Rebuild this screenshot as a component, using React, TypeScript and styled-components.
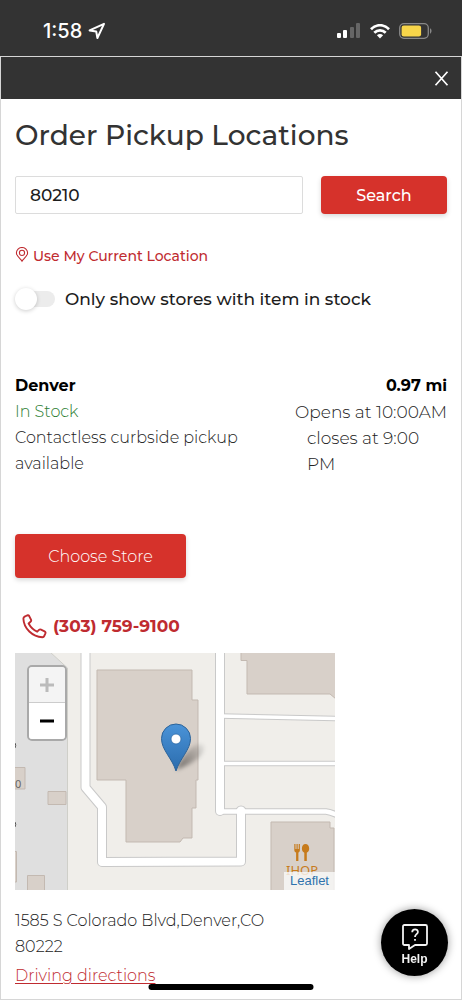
import React, { useState } from "react";
import styled, { createGlobalStyle, css } from "styled-components";

const GlobalStyle = createGlobalStyle`
  *, *::before, *::after { box-sizing: border-box; }
  body {
    margin: 0;
    background: #fff;
    color: #222;
    font-family: Montserrat, Inter, "Liberation Sans", sans-serif;
    font-size: 16px;
    line-height: 26px;
    font-weight: 300;
  }
  h1, h2, p { margin: 0; }
  button, input { font-family: inherit; }
`;

const red = "#d6322b";
const linkRed = "#bf2b30";

const Page = styled.div`
  min-height: 100vh;
  display: flex;
  flex-direction: column;
`;

const StatusBar = styled.header`
  height: 56px;
  padding: 6px 30px 0 43px;
  display: flex;
  align-items: center;
  justify-content: space-between;
  background: #333;
  color: #fff;
`;

const StatusGroup = styled.div<{ $gap: number }>`
  display: flex;
  align-items: center;
  gap: ${(p) => p.$gap}px;
`;

const Clock = styled.span`
  font-family: Inter, sans-serif;
  font-size: 20px;
  line-height: 24px;
  font-weight: 500;
`;

const Dialog = styled.main`
  flex: 1;
  border: 1px solid #d6d6d6;
`;

const DialogBar = styled.div`
  height: 42px;
  padding-right: 10px;
  display: flex;
  align-items: center;
  justify-content: flex-end;
  background: #333;
`;

const CloseButton = styled.button`
  display: flex;
  padding: 2px;
  border: 0;
  background: none;
  color: #fff;
  cursor: pointer;
`;

const Content = styled.div`
  padding: 18px 14px 10px;
`;

const Title = styled.h1`
  color: #333;
  font-size: 28px;
  line-height: 36px;
  font-weight: 500;
`;

const SearchForm = styled.form`
  display: flex;
  gap: 18px;
  margin-top: 23px;
`;

const ZipInput = styled.input`
  flex: 1;
  min-width: 0;
  height: 38px;
  padding: 0 14px;
  border: 1px solid #dcdcdc;
  border-radius: 2px;
  background: #fff;
  color: #1c1c1c;
  font-size: 17px;
  font-weight: 500;
`;

const RedButton = styled.button<{ $large?: boolean }>`
  border: 0;
  border-radius: 4px;
  background: ${red};
  color: #fff;
  font-size: 16px;
  box-shadow: 0 2px 5px rgba(0, 0, 0, 0.16);
  cursor: pointer;
  ${(p) =>
    p.$large
      ? css`
          width: 171px;
          height: 44px;
          margin-top: 57px;
          font-weight: 300;
        `
      : css`
          width: 126px;
          height: 38px;
          font-weight: 500;
        `}
`;

const LocateButton = styled.button`
  display: flex;
  align-items: center;
  gap: 4px;
  margin-top: 29px;
  padding: 0;
  border: 0;
  background: none;
  color: ${linkRed};
  font-size: 14px;
  line-height: 26px;
  font-weight: 500;
  cursor: pointer;
`;

const ToggleLabel = styled.label`
  display: flex;
  align-items: center;
  gap: 10px;
  margin-top: 17px;
  color: #1c1c1c;
  font-size: 17px;
  font-weight: 500;
`;

const Toggle = styled.input`
  appearance: none;
  position: relative;
  width: 38px;
  height: 16px;
  margin: 0 0 0 2px;
  border-radius: 8px;
  background: #ececec;
  &::before {
    content: "";
    position: absolute;
    top: -3px;
    left: -2px;
    width: 22px;
    height: 22px;
    border-radius: 50%;
    background: #fff;
    box-shadow: 0 1px 4px rgba(0, 0, 0, 0.2);
  }
  &:checked::before { left: 18px; }
  &:checked { background: ${red}; }
`;

const Store = styled.section`
  margin-top: 61px;
`;

const StoreSummary = styled.div`
  display: flex;
  justify-content: space-between;
`;

const StoreInfo = styled.div`
  flex: 0 1 240px;
`;

const StoreHours = styled.div`
  flex: 0 0 152px;
`;

const StoreName = styled.h2`
  color: #000;
  font-size: 16px;
  line-height: 26px;
  font-weight: 700;
`;

const Distance = styled.p`
  color: #000;
  font-weight: 700;
  text-align: right;
`;

const Opens = styled.p`
  font-size: 17px;
  text-align: right;
  white-space: nowrap;
`;

const Closes = styled.p`
  padding: 0 12px;
  font-size: 17px;
`;

const InStock = styled.p`
  color: #2b7d2f;
`;

const PhoneLink = styled.a`
  display: flex;
  align-items: center;
  gap: 6px;
  width: fit-content;
  margin-top: 35px;
  padding-left: 7px;
  color: ${linkRed};
  font-size: 17px;
  font-weight: 700;
  text-decoration: none;
`;

const MapFrame = styled.div`
  position: relative;
  max-width: 320px;
  margin-top: 14px;
  overflow: hidden;
  > svg { display: block; width: 100%; height: auto; }
`;

const ZoomControl = styled.div`
  position: absolute;
  top: 12px;
  left: 12px;
  width: 40px;
  border: 2px solid #a9a9a9;
  border-radius: 5px;
  overflow: hidden;
`;

const ZoomButton = styled.button`
  display: flex;
  align-items: center;
  justify-content: center;
  width: 100%;
  height: 36px;
  padding: 0;
  border: 0;
  background: #fff;
  color: #000;
  &:disabled {
    border-bottom: 1px solid #ccc;
    background: #f4f4f4;
    color: #bbb;
  }
`;

const Attribution = styled.a`
  position: absolute;
  right: 0;
  bottom: 0;
  padding: 0 6px;
  background: rgba(250, 250, 250, 0.8);
  color: #2f72ad;
  font-family: "Liberation Sans", sans-serif;
  font-size: 13px;
  line-height: 18px;
  font-weight: 400;
  text-decoration: none;
`;

const Address = styled.p`
  max-width: 300px;
  margin-top: 18px;
`;

const DirectionsLink = styled.a`
  display: block;
  width: fit-content;
  margin-top: 3px;
  color: ${linkRed};
  text-underline-offset: 2px;
`;

const HelpButton = styled.button`
  position: fixed;
  right: 14px;
  bottom: 24px;
  display: flex;
  flex-direction: column;
  align-items: center;
  justify-content: center;
  gap: 2px;
  width: 67px;
  height: 67px;
  padding: 4px 0 0;
  border: 0;
  border-radius: 50%;
  background: #000;
  color: #f2f2f2;
  font-family: "Liberation Sans", sans-serif;
  font-size: 12px;
  line-height: 14px;
  font-weight: 700;
  box-shadow: 0 0 8px rgba(0, 0, 0, 0.4);
`;

const HomeIndicator = styled.div`
  position: fixed;
  bottom: 10px;
  left: 50%;
  width: 165px;
  height: 6px;
  border-radius: 3px;
  background: #000;
  transform: translateX(-50%);
`;

function StatusIcons() {
  return (
    <StatusGroup $gap={9}>
      <svg width="24" height="16" viewBox="0 0 24 16" fill="#fff" aria-hidden="true">
        <rect x="0" y="10" width="4" height="5" rx="1" />
        <rect x="6" y="7" width="4" height="8" rx="1" />
        <rect x="13" y="4" width="4" height="11" rx="1" fill="#666" />
        <rect x="19" y="0" width="4" height="15" rx="1" fill="#666" />
      </svg>
      <svg width="20" height="15" viewBox="0 0 20 15" fill="none" stroke="#fff" strokeWidth="2.7" aria-hidden="true">
        <path d="M1 5.2C6-.1 14-.1 19 5.2" />
        <path d="M4.3 8.8c3.2-3.3 8.2-3.3 11.4 0" />
        <path d="M6.9 11.2c1.8-1.6 4.4-1.6 6.2 0L10 14.6z" fill="#fff" stroke="none" />
      </svg>
      <svg width="33" height="16" viewBox="0 0 33 16" aria-hidden="true">
        <rect x=".7" y=".7" width="28.6" height="14.6" rx="4.2" fill="none" stroke="#888" strokeWidth="1.3" />
        <rect x="2.6" y="2.6" width="19.5" height="10.8" rx="2.2" fill="#f7d54a" />
        <path d="M31 5.3c2 .7 2 4.7 0 5.4z" fill="#888" />
      </svg>
    </StatusGroup>
  );
}

function StoreMap() {
  return (
    <svg viewBox="0 0 320 237" role="img" aria-label="Map of the Denver store">
      <defs>
        <linearGradient id="pin" x1="0" y1="0" x2="0" y2="1">
          <stop offset="0" stopColor="#4a93d8" />
          <stop offset="1" stopColor="#2b6cad" />
        </linearGradient>
        <linearGradient id="pinShadow" x1="0" y1="1" x2="1" y2="0">
          <stop offset="0" stopColor="#000" stopOpacity=".5" />
          <stop offset="1" stopColor="#000" stopOpacity=".05" />
        </linearGradient>
        <filter id="soft" x="-30%" y="-30%" width="160%" height="160%">
          <feGaussianBlur stdDeviation="2" />
        </filter>
      </defs>
      <rect width="320" height="237" fill="#f0eeea" />
      <path d="M-1-1H35L52.500 15V238H-1z" fill="#dfdfdf" stroke="#cfcfc9" />
      <g fill="none" stroke="#c9c9c9">
        <path d="M70.5-6V134.500L87 154V209L226 208.500V158" strokeWidth="10" strokeLinejoin="round" />
        <path d="M205-6V158" strokeWidth="10" strokeLinecap="round" />
        <path d="M226 158v.1" strokeWidth="11" strokeLinecap="round" />
        <path d="M205 158.500H311Q316 159 324 163" strokeWidth="6.500" />
        <path d="M205 63L326 65.500M205 110.500H326" strokeWidth="5.500" />
      </g>
      <g fill="none" stroke="#fff" strokeLinejoin="round">
        <path d="M70.5-6V134.500L87 154V209L226 208.500V158" strokeWidth="8" />
        <path d="M205-6V158" strokeWidth="8" strokeLinecap="round" />
        <path d="M226 158v.1" strokeWidth="9" strokeLinecap="round" />
        <path d="M205 158.500H311Q316 159 324 163" strokeWidth="4.500" />
        <path d="M205 63L326 65.500M205 110.500H326" strokeWidth="3.500" />
      </g>
      <g fill="#d8d0c9" stroke="#c3b9b1">
        <path d="M82 17H177V47H183V127H181V155H177V185H168L165 189H111V127H82z" />
        <path d="M226-2V7.500H232V41H315L321 46V-2z" />
        <path d="M256 239V169H315V175H319V239z" />
        <path d="M-1 114.500H10V136H-1zM33 138.500H51V151.500H33zM12.500 222.500H29.500V239H12.500zM-1 198.500H1.500V229H-1z" />
      </g>
      <text x="0" y="135" fill="#666" fontFamily="Noto Sans, sans-serif" fontSize="11" fontWeight="400">0</text>
      <path d="M0 90q1.500 2 0 5M0 169q1.500 2 0 5" stroke="#555" fill="none" />
      <g fill="#c77b1c">
        <path d="M279.300 191h1.200v5h1v-5h1.200v5h1v-5h1.200v6c0 1.500-.8 2.100-1.500 2.500v8.500h-2.300v-8.500c-1-.4-1.800-1-1.800-2.500z" />
        <path d="M290.500 191c2.200 0 3.700 2 3.700 4.600 0 2.200-1 3.600-2.400 4.100v8.300h-2.500v-8.300c-1.400-.5-2.400-1.900-2.400-4.100 0-2.600 1.400-4.600 3.600-4.600z" />
        <text x="287" y="222" textAnchor="middle" fontFamily="Noto Sans, sans-serif" fontSize="13" fontWeight="400">IHOP</text>
      </g>
      <path d="M161 117C167 102 176 93 184 91C192 91 190 99 183 105C176 111 168 114 161 117z" fill="url(#pinShadow)" filter="url(#soft)" />
      <path d="M161 118C157 105 146.500 97 146.500 85.500A14.500 14.500 0 0 1 175.500 85.500C175.500 97 165 105 161 118z" fill="url(#pin)" stroke="#2c6399" />
      <circle cx="161" cy="86" r="5" fill="#fff" stroke="#2f6ba8" strokeWidth=".8" />
    </svg>
  );
}

export default function App() {
  const [zip, setZip] = useState("80210");
  const [inStockOnly, setInStockOnly] = useState(false);

  return (
    <Page>
      <GlobalStyle />
      <StatusBar>
        <StatusGroup $gap={6}>
          <Clock>1:58</Clock>
          <svg width="18" height="18" viewBox="0 0 18 18" fill="none" stroke="#fff" strokeWidth="2" strokeLinejoin="round" aria-hidden="true">
            <path d="M16 1.800L1.600 8.400L8.200 9.400L9.400 16z" />
          </svg>
        </StatusGroup>
        <StatusIcons />
      </StatusBar>
      <Dialog>
        <DialogBar>
          <CloseButton type="button" aria-label="Close">
            <svg width="15" height="15" viewBox="0 0 15 15" fill="none" stroke="currentColor" strokeWidth="1.700">
              <path d="M1.500 .8L13.500 14.200M13.500 .8L1.500 14.200" />
            </svg>
          </CloseButton>
        </DialogBar>
        <Content>
          <Title>Order Pickup Locations</Title>
          <SearchForm onSubmit={(e) => e.preventDefault()}>
            <ZipInput aria-label="ZIP code" value={zip} onChange={(e) => setZip(e.target.value)} />
            <RedButton type="submit">Search</RedButton>
          </SearchForm>
          <LocateButton type="button">
            <svg width="14" height="18" viewBox="0 0 14 18" fill="none" stroke="currentColor" strokeWidth="1.100" aria-hidden="true">
              <path d="M7 14.200C5.500 12 1.400 9 1.400 5.900a5.600 5.400 0 0 1 11.200 0C12.600 9 8.500 12 7 14.200z" />
              <circle cx="7" cy="5.900" r="2.600" />
            </svg>
            Use My Current Location
          </LocateButton>
          <ToggleLabel>
            <Toggle type="checkbox" checked={inStockOnly} onChange={(e) => setInStockOnly(e.target.checked)} />
            Only show stores with item in stock
          </ToggleLabel>
          <Store>
            <StoreSummary>
              <StoreInfo>
                <StoreName>Denver</StoreName>
                <InStock>In Stock</InStock>
                <p>Contactless curbside pickup available</p>
              </StoreInfo>
              <StoreHours>
                <Distance>0.97 mi</Distance>
                <Opens>Opens at 10:00AM</Opens>
                <Closes>closes at 9:00 PM</Closes>
              </StoreHours>
            </StoreSummary>
            <RedButton type="button" $large>Choose Store</RedButton>
            <PhoneLink href="tel:+13037599100">
              <svg width="25" height="25" viewBox="0 0 25 25" fill="none" stroke="currentColor" strokeWidth="1.900" strokeLinejoin="round" aria-hidden="true">
                <path d="M2.600 2.700L5 1.500Q6.500 .9 7.200 2.100L9 5.600Q9.600 6.900 8.500 7.800L6.600 9.500C8.500 13 11.500 16 15.200 17.700L17 15.900Q17.900 15.100 19 15.600L22.600 17.300Q23.900 18 23.400 19.300L22.300 21.900Q21.800 23.200 20.400 23.200C10.500 22.700 1.800 14.600 1.400 4.700Q1.400 3.300 2.600 2.700z" />
              </svg>
              (303) 759-9100
            </PhoneLink>
            <MapFrame>
              <StoreMap />
              <ZoomControl>
                <ZoomButton type="button" aria-label="Zoom in" disabled>
                  <svg width="14" height="14" viewBox="0 0 14 14" stroke="currentColor" strokeWidth="3"><path d="M0 7H14M7 0V14" /></svg>
                </ZoomButton>
                <ZoomButton type="button" aria-label="Zoom out">
                  <svg width="14" height="14" viewBox="0 0 14 14" stroke="currentColor" strokeWidth="3"><path d="M0 7H14" /></svg>
                </ZoomButton>
              </ZoomControl>
              <Attribution href="#leaflet">Leaflet</Attribution>
            </MapFrame>
            <Address>1585 S Colorado Blvd,Denver,CO 80222</Address>
            <DirectionsLink href="#directions">Driving directions</DirectionsLink>
          </Store>
        </Content>
      </Dialog>
      <HelpButton type="button">
        <svg width="26" height="26" viewBox="0 0 26 26" fill="none" stroke="currentColor" strokeWidth="1.800" strokeLinejoin="round" aria-hidden="true">
          <path d="M2.500 1H23.500Q25 1 25 2.500V19.500Q25 21 23.500 21H13L7 25V21H2.500Q1 21 1 19.500V2.500Q1 1 2.500 1z" />
          <path d="M10.200 8.200C10.300 4.300 16 4.500 15.900 8C15.800 10.200 13 10.200 13 13M13 15V16.800" />
        </svg>
        Help
      </HelpButton>
      <HomeIndicator />
    </Page>
  );
}
